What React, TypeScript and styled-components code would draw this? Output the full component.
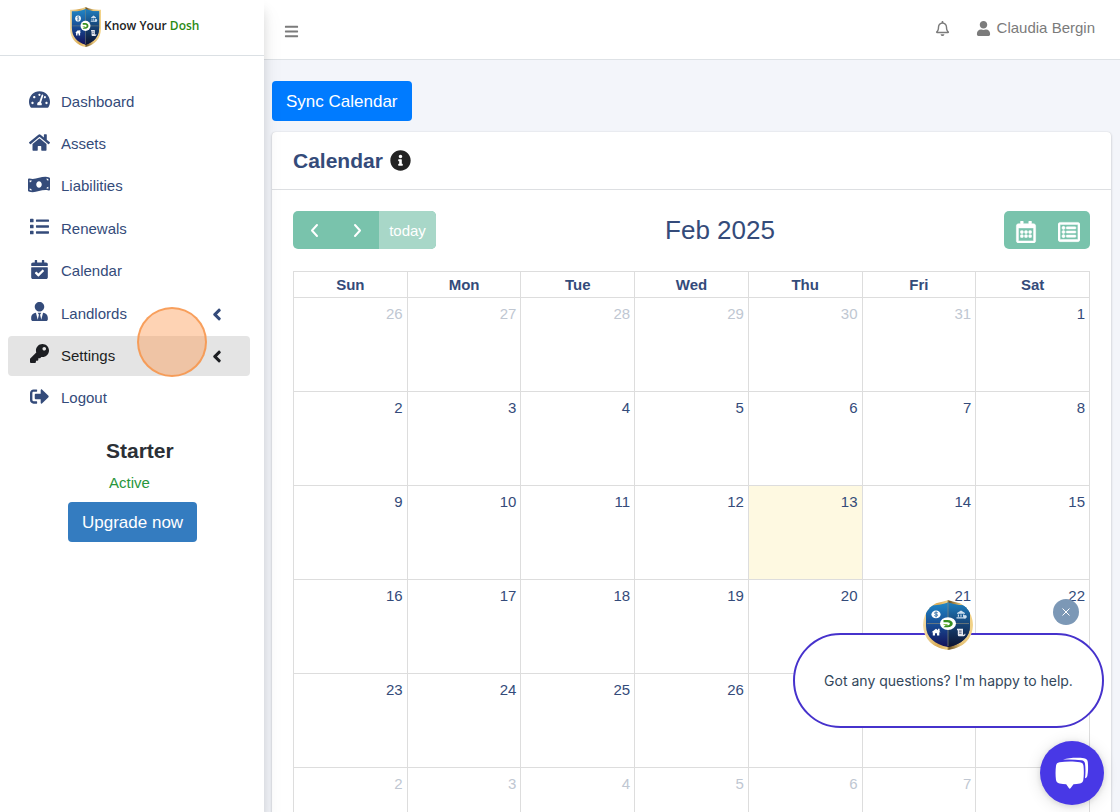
import React from "react";
import styled, { createGlobalStyle } from "styled-components";
import {
  FaAngleLeft,
  FaBars,
  FaCalendarCheck,
  FaHome,
  FaInfoCircle,
  FaKey,
  FaList,
  FaMoneyBillWave,
  FaRegBell,
  FaRegCalendarAlt,
  FaRegListAlt,
  FaSignOutAlt,
  FaTachometerAlt,
  FaUser,
  FaUserTie,
} from "react-icons/fa";
import type { IconType } from "react-icons";

const GlobalStyle = createGlobalStyle`
  *, *::before, *::after { box-sizing: border-box; }
  body {
    margin: 0;
    font-family: "Liberation Sans", Arial, sans-serif;
    font-size: 15px;
    line-height: 22px;
    color: #344b7a;
    background: #f3f5fa;
  }
  button { font-family: inherit; border: 0; cursor: pointer; }
  a { color: inherit; text-decoration: none; }
`;

const Shell = styled.div`
  display: flex;
  height: 100vh;
  overflow: hidden;
`;

const Sidebar = styled.aside`
  position: relative;
  z-index: 2;
  flex: 0 0 264px;
  background: #fff;
  box-shadow: 0 14px 20px rgba(0, 0, 0, 0.08), 0 10px 10px rgba(0, 0, 0, 0.1);
`;

const Brand = styled.a`
  display: flex;
  align-items: center;
  gap: 3px;
  height: 56px;
  padding: 0 0 2px 70px;
  border-bottom: 1px solid #dbe0e4;
  font-family: "Open Sans", sans-serif;
  font-size: 12px;
  font-weight: 600;
  color: #222;
`;

const BrandName = styled.span`
  padding-bottom: 2px;
`;

const BrandAccent = styled.span`
  color: #2a8a12;
`;

const NavList = styled.ul`
  display: flex;
  flex-direction: column;
  gap: 3px;
  height: 336px;
  margin: 26px 14px 0 8px;
  padding: 0;
  list-style: none;
`;

const NavItem = styled.li`
  flex: 1;
  display: flex;
`;

const NavLink = styled.a<{ $active?: boolean }>`
  flex: 1;
  display: grid;
  grid-template-columns: 24px 1fr 12px;
  align-items: center;
  column-gap: 9px;
  padding: 0 27px 0 20px;
  border-radius: 4px;
  color: ${(p) => (p.$active ? "#1c1e22" : "#344b7a")};
  background: ${(p) => (p.$active ? "#e4e4e4" : "transparent")};
`;

const NavIcon = styled.span`
  display: flex;
  justify-content: center;
  width: 22px;
  padding-bottom: 4px;
`;

const NavArrow = styled.span`
  display: flex;
  justify-content: center;
  padding-top: 2px;
`;

const ClickMarker = styled.span`
  position: absolute;
  left: 137px;
  top: 307px;
  width: 70px;
  height: 70px;
  border: 2px solid rgba(246, 146, 70, 0.8);
  border-radius: 50%;
  background: rgba(253, 158, 88, 0.45);
  pointer-events: none;
`;

const Plan = styled.section`
  display: flex;
  flex-direction: column;
  align-items: flex-start;
  padding: 19px 0 0 68px;
`;

const PlanName = styled.h2`
  margin: 0;
  padding-left: 38px;
  font-size: 21px;
  line-height: 28px;
  color: #2b3036;
`;

const PlanStatus = styled.p`
  margin: 7px 0 8px;
  padding-left: 41px;
  color: #28963c;
`;

const SolidButton = styled.button<{ $color: string }>`
  height: 40px;
  padding: 1px 14px 0;
  border-radius: 4px;
  font-size: 17px;
  color: #fff;
  background: ${(p) => p.$color};
`;

const Main = styled.div`
  flex: 1;
  min-width: 0;
  display: flex;
  flex-direction: column;
`;

const TopBar = styled.header`
  flex: none;
  display: flex;
  align-items: center;
  height: 60px;
  padding: 0 25px 3px 20px;
  border-bottom: 1px solid #dee2e6;
  background: #fff;
  color: #7b7b7b;
`;

const MenuButton = styled.button`
  display: flex;
  margin-right: auto;
  padding: 7px 0 0;
  background: none;
  color: inherit;
`;

const BellButton = styled(MenuButton)`
  margin-right: 26px;
  padding: 0;
`;

const Account = styled.a`
  display: flex;
  align-items: center;
  gap: 6px;
`;

const Content = styled.main`
  flex: 1;
  min-height: 0;
  overflow-y: auto;
  scrollbar-width: none;
  padding: 21px 9px 21px 8px;
`;

const Card = styled.section`
  margin-top: 11px;
  border-radius: 4px;
  background: #fff;
  box-shadow: 0 0 1px rgba(0, 0, 0, 0.13), 0 1px 3px rgba(0, 0, 0, 0.2);
`;

const CardHeader = styled.header`
  display: flex;
  align-items: center;
  gap: 7px;
  height: 58px;
  padding: 0 21px;
  border-bottom: 1px solid #dddfe2;
  color: #222;
`;

const CardTitle = styled.h1`
  margin: 0;
  font-size: 21px;
  line-height: 28px;
  color: #344b7a;
`;

const CardBody = styled.div`
  padding: 21px;
`;

const Toolbar = styled.div`
  display: flex;
  align-items: center;
  justify-content: space-between;
  margin-bottom: 22px;
`;

const ToolbarTitle = styled.h2`
  margin: 0;
  font-size: 26px;
  font-weight: 400;
  line-height: 38px;
`;

const ButtonGroup = styled.div`
  display: flex;
  height: 38px;
  overflow: hidden;
  border-radius: 5px;
  background: #79c3ac;
`;

const GroupButton = styled.button<{ $wide?: boolean }>`
  display: flex;
  align-items: center;
  justify-content: center;
  width: ${(p) => (p.$wide ? 57 : 43)}px;
  padding: 0;
  font-size: 15px;
  color: #fff;
  background: transparent;
  &:disabled {
    color: #fff;
    background: #a8d7c8;
  }
`;

const ViewButton = styled(GroupButton)`
  padding-top: 3px;
  svg {
    stroke: currentColor;
    stroke-width: 12px;
  }
`;

const MonthTable = styled.table`
  width: 100%;
  table-layout: fixed;
  border-collapse: collapse;
`;

const WeekdayCell = styled.th`
  height: 26px;
  padding: 1px 0 0;
  border: 1px solid #ddd;
`;

const DayCell = styled.td<{ $muted: boolean; $today: boolean }>`
  height: 94px;
  padding: 5px 4px;
  border: 1px solid #ddd;
  text-align: right;
  vertical-align: top;
  color: ${(p) => (p.$muted ? "#c0c7d2" : "#344b7a")};
  background: ${(p) => (p.$today ? "#fef9e1" : "transparent")};
`;

const ChatPrompt = styled.section`
  position: fixed;
  z-index: 3;
  right: 16px;
  bottom: 84px;
  display: flex;
  align-items: center;
  justify-content: center;
  width: 311px;
  height: 95px;
  border: 2px solid #4632cc;
  border-radius: 48px;
  background: #fff;
  font-family: Inter, sans-serif;
  font-size: 14px;
  color: #33475b;
`;

const ChatAvatar = styled.span`
  position: absolute;
  top: -35px;
  left: 128px;
  display: flex;
  overflow: hidden;
  border-radius: 50%;
`;

const CloseButton = styled.button`
  position: absolute;
  top: -36px;
  right: 23px;
  display: flex;
  align-items: center;
  justify-content: center;
  width: 26px;
  height: 26px;
  padding: 0;
  border-radius: 50%;
  background: #7c98b6;
`;

const ChatButton = styled.button`
  position: fixed;
  z-index: 3;
  right: 16px;
  bottom: 7px;
  display: flex;
  align-items: center;
  justify-content: center;
  width: 64px;
  height: 64px;
  padding: 0;
  border-radius: 50%;
  background: #4838e6;
  box-shadow: 0 1px 6px rgba(0, 0, 0, 0.12), 0 2px 16px rgba(0, 0, 0, 0.12);
`;

function Shield({ id, width, height }: { id: string; width: number; height: number }) {
  const outline = "M25 0 C32 3 42 4 50 3.500 V28 C50 42 38 50 25 52 C12 50 0 42 0 28 V3.500 C8 4 18 3 25 0Z";
  const inner = "M25 2.500 C31 5 40 6 47 5.500 V27 C47 39 38 46 25 49 C12 46 3 39 3 27 V5.500 C10 6 19 5 25 2.500Z";
  return (
    <svg width={width} height={height} viewBox="0 0 50 52" preserveAspectRatio="none" aria-hidden="true">
      <defs>
        <linearGradient id={`${id}-gold`} x1="0" x2="1" y1="0" y2="0">
          <stop offset="0" stopColor="#f3dca6" />
          <stop offset="0.3" stopColor="#d9ab55" />
          <stop offset="0.48" stopColor="#f0cf85" />
          <stop offset="0.52" stopColor="#6f5424" />
          <stop offset="0.75" stopColor="#e5c278" />
          <stop offset="1" stopColor="#f3d48a" />
        </linearGradient>
        <linearGradient id={`${id}-left`} x1="0" x2="0" y1="0" y2="1">
          <stop offset="0" stopColor="#2187c6" />
          <stop offset="0.5" stopColor="#174c94" />
          <stop offset="1" stopColor="#14115a" />
        </linearGradient>
        <linearGradient id={`${id}-right`} x1="0" x2="0" y1="0" y2="1">
          <stop offset="0" stopColor="#1f7fc0" />
          <stop offset="0.5" stopColor="#164274" />
          <stop offset="1" stopColor="#0d1430" />
        </linearGradient>
        <clipPath id={`${id}-half`}>
          <rect x="25" y="0" width="25" height="52" />
        </clipPath>
      </defs>
      <path d={outline} fill={`url(#${id}-gold)`} />
      <path d={inner} fill={`url(#${id}-left)`} />
      <path d={inner} fill={`url(#${id}-right)`} clipPath={`url(#${id}-half)`} />
      <path d="M25 3V48M4 24.500H46" stroke="#8b8a78" strokeWidth="0.7" />
      <ellipse cx="13" cy="15" rx="4.600" ry="4" fill="#fff" />
      <path d="M14.800 13.300c-1-.9-3.600-.7-3.300.5.3 1.200 3.100.6 3.200 1.900.1 1.300-2.700 1.400-3.500.4M13.100 12v6" fill="none" stroke="#1d5f9e" strokeWidth="0.8" />
      <path d="M34 13.500l4-2.500 4 2.500v.8h-8zM34.800 15h1.200v2.500h-1.200zM37.400 15h1.200v2.500h-1.200zM40 15h1.200v2.500H40zM33.500 18h9v1.300h-9z" fill="#cfe0ef" />
      <circle cx="42" cy="17.500" r="1.800" fill="#cfe0ef" />
      <path d="M8.500 33.500L13 30l2 1.500V30h1.600v2.700L17.700 33.500h-1.400v3.500h-2.300v-2.500h-2V37H9.800v-3.500z" fill="#fff" />
      <path d="M34 30h6v5.500c0 1 1.600 1 1.600-.3h.9c0 1.600-.7 2.600-2 2.600h-4c-1.200 0-1.700-.8-1.700-1.700V31.500H34z" fill="#e6e9f0" />
      <path d="M36 32.300h2.600M36 34.500h2.600" stroke="#142650" strokeWidth="0.8" />
      <ellipse cx="25" cy="24.500" rx="8" ry="6.600" fill="#fff" />
      <path d="M20.500 20.800h4c7 0 7 7.500 0 7.500h-4l2-2h2c3.200 0 3.200-3.200 0-3.200h-4z" fill="#37901f" />
      <path d="M20.500 25.500h4" stroke="#8bc34a" strokeWidth="1.200" />
    </svg>
  );
}

function Chevron({ d }: { d: string }) {
  return (
    <svg width="16" height="16" viewBox="0 0 16 16" fill="none" stroke="#fff" strokeWidth="2" strokeLinecap="round" strokeLinejoin="round" aria-hidden="true">
      <path d={d} />
    </svg>
  );
}

interface NavEntry {
  label: string;
  icon: IconType;
  size: number;
  arrow?: boolean;
  active?: boolean;
}

const NAV: NavEntry[] = [
  { label: "Dashboard", icon: FaTachometerAlt, size: 21 },
  { label: "Assets", icon: FaHome, size: 21 },
  { label: "Liabilities", icon: FaMoneyBillWave, size: 23 },
  { label: "Renewals", icon: FaList, size: 19 },
  { label: "Calendar", icon: FaCalendarCheck, size: 19 },
  { label: "Landlords", icon: FaUserTie, size: 19, arrow: true },
  { label: "Settings", icon: FaKey, size: 19, arrow: true, active: true },
  { label: "Logout", icon: FaSignOutAlt, size: 19 },
];

const WEEKDAYS = ["Sun", "Mon", "Tue", "Wed", "Thu", "Fri", "Sat"];
const TODAY = 13;
const GRID_START = new Date(2025, 0, 26);

const WEEKS = Array.from({ length: 6 }, (_, week) =>
  WEEKDAYS.map((_, day) => {
    const date = new Date(GRID_START);
    date.setDate(date.getDate() + week * 7 + day);
    return date;
  })
);

export default function App() {
  return (
    <>
      <GlobalStyle />
      <Shell>
        <Sidebar>
          <Brand href="#">
            <Shield id="brand" width={31} height={40} />
            <BrandName>
              Know Your <BrandAccent>Dosh</BrandAccent>
            </BrandName>
          </Brand>
          <nav aria-label="Main">
            <NavList>
              {NAV.map(({ label, icon: Icon, size, arrow, active }) => (
                <NavItem key={label}>
                  <NavLink href="#" $active={active}>
                    <NavIcon>
                      <Icon size={size} />
                    </NavIcon>
                    {label}
                    {arrow && (
                      <NavArrow>
                        <FaAngleLeft size={19} />
                      </NavArrow>
                    )}
                  </NavLink>
                </NavItem>
              ))}
            </NavList>
          </nav>
          <Plan>
            <PlanName>Starter</PlanName>
            <PlanStatus>Active</PlanStatus>
            <SolidButton $color="#347cc0">Upgrade now</SolidButton>
          </Plan>
          <ClickMarker />
        </Sidebar>
        <Main>
          <TopBar>
            <MenuButton aria-label="Toggle menu">
              <FaBars size={15} />
            </MenuButton>
            <BellButton aria-label="Notifications">
              <FaRegBell size={15} />
            </BellButton>
            <Account href="#">
              <FaUser size={15} />
              Claudia Bergin
            </Account>
          </TopBar>
          <Content>
            <SolidButton $color="#007bff">Sync Calendar</SolidButton>
            <Card>
              <CardHeader>
                <CardTitle>Calendar</CardTitle>
                <FaInfoCircle size={21} />
              </CardHeader>
              <CardBody>
                <Toolbar>
                  <ButtonGroup>
                    <GroupButton aria-label="Previous month">
                      <Chevron d="M10 3L5 8.500L10 14" />
                    </GroupButton>
                    <GroupButton aria-label="Next month">
                      <Chevron d="M5 3L10 8.500L5 14" />
                    </GroupButton>
                    <GroupButton $wide disabled>
                      today
                    </GroupButton>
                  </ButtonGroup>
                  <ToolbarTitle>Feb 2025</ToolbarTitle>
                  <ButtonGroup>
                    <ViewButton aria-label="Month view">
                      <FaRegCalendarAlt size={22} />
                    </ViewButton>
                    <ViewButton aria-label="List view">
                      <FaRegListAlt size={22} />
                    </ViewButton>
                  </ButtonGroup>
                </Toolbar>
                <MonthTable>
                  <thead>
                    <tr>
                      {WEEKDAYS.map((day) => (
                        <WeekdayCell key={day} scope="col">
                          {day}
                        </WeekdayCell>
                      ))}
                    </tr>
                  </thead>
                  <tbody>
                    {WEEKS.map((week) => (
                      <tr key={week[0].getTime()}>
                        {week.map((date) => (
                          <DayCell
                            key={date.getTime()}
                            $muted={date.getMonth() !== 1}
                            $today={date.getMonth() === 1 && date.getDate() === TODAY}
                          >
                            {date.getDate()}
                          </DayCell>
                        ))}
                      </tr>
                    ))}
                  </tbody>
                </MonthTable>
              </CardBody>
            </Card>
          </Content>
        </Main>
      </Shell>
      <ChatPrompt aria-label="Chat message">
        Got any questions? I'm happy to help.
        <ChatAvatar>
          <Shield id="avatar" width={50} height={50} />
        </ChatAvatar>
        <CloseButton aria-label="Close">
          <svg width="8" height="8" viewBox="0 0 8 8" stroke="#fff" strokeWidth="1" aria-hidden="true">
            <path d="M0.500 0.500L7.500 7.500M7.500 0.500L0.500 7.500" />
          </svg>
        </CloseButton>
      </ChatPrompt>
      <ChatButton aria-label="Open chat">
        <svg width="34" height="32" viewBox="0 0 34 32" aria-hidden="true">
          <path d="M8 2.500C14 .6 23 .3 29 1.200C31.500 1.600 32.500 2.800 32.800 5C33.300 10 33.200 15 32.300 19C32 20.300 31.300 21 30 21.300C30.700 16 30.600 11 30 6.500C29.700 4.400 28.500 3.500 26.500 3.200C20 2.300 14 2.300 8 2.500Z" fill="#fff" />
          <path d="M4.500 5.200C11 4.200 19 4.200 25 5.200C27.200 5.600 28.200 6.600 28.500 8.800C29 13.500 29 18.500 28.300 23C28 25 27 26 25 26.400C22.500 26.800 20.500 27 18.500 27.200L15.500 31.200C15 31.800 14.400 31.800 14 31.200L11.200 27.200C9 27 6.800 26.800 4.600 26.400C2.400 26 1.300 25 1 23C.4 18.500 .4 13.500 1 8.800C1.300 6.600 2.300 5.500 4.500 5.200Z" fill="#fff" />
        </svg>
      </ChatButton>
    </>
  );
}
